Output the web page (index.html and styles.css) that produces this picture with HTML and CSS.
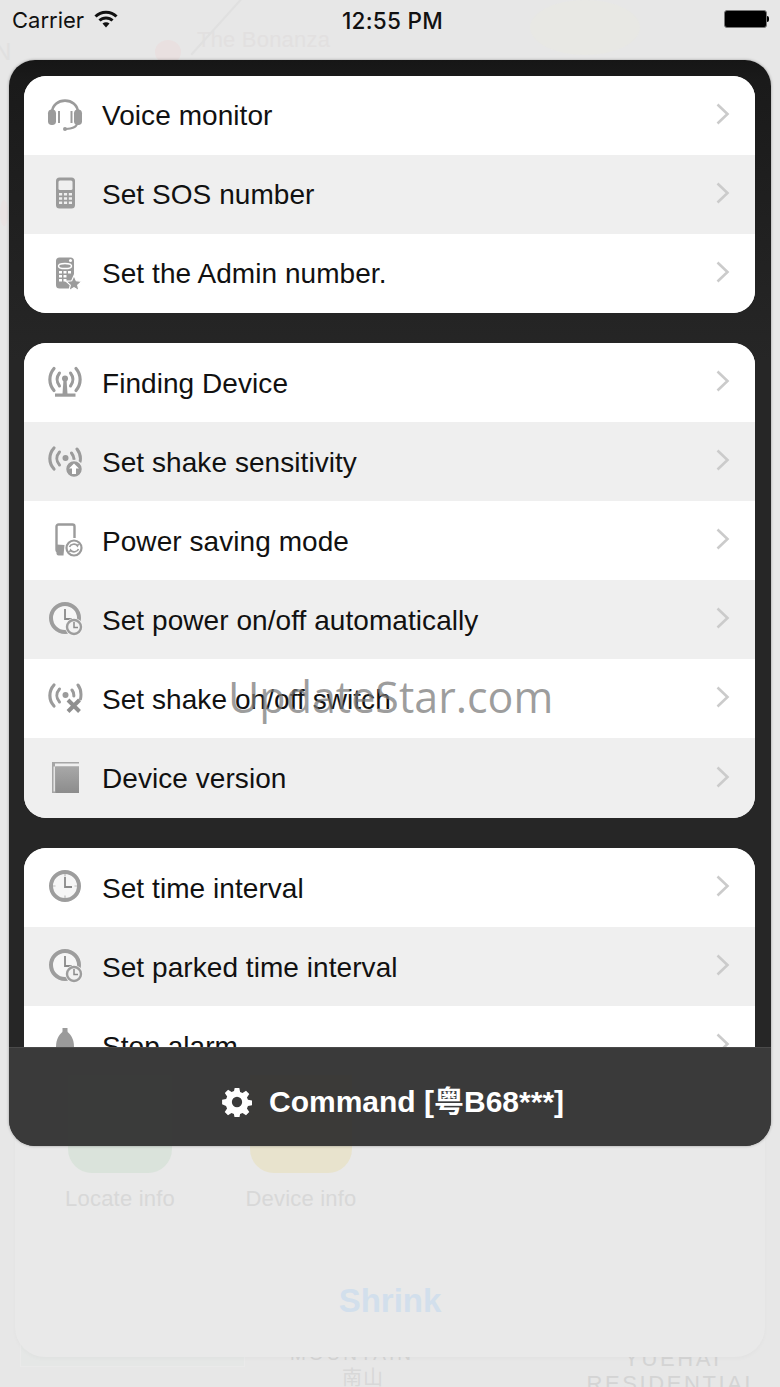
FILE: index.html
```html
<!DOCTYPE html>
<html lang="en">
<head>
<meta charset="utf-8">
<title>Command</title>
<link rel="stylesheet" href="styles.css">
</head>
<body>
<svg class="defs" width="0" height="0" aria-hidden="true">
  <defs>
    <symbol id="chev" viewBox="0 0 16 24"><path d="M2.500 2.500 12.500 12 2.500 21.500" fill="none" stroke="#cbcbcb" stroke-width="2.600"/></symbol>
    <symbol id="radio" viewBox="0 0 36 36">
      <g fill="none" stroke="#9b9b9b" stroke-linecap="round">
        <path d="M7 5C1.500 11 1.500 20 7 26" stroke-width="3.200"/>
        <path d="M12.500 9C9 13 9 18 12.500 22" stroke-width="3"/>
      </g>
    </symbol>
    <symbol id="clockbig" viewBox="0 0 36 36">
      <circle cx="18" cy="17" r="14" fill="#f6f6f6" stroke="#9d9d9d" stroke-width="4"/>
      <path d="M18 8v10h7" fill="none" stroke="#8a8a8a" stroke-width="1.800"/>
    </symbol>
    <symbol id="clocksmall" viewBox="0 0 36 36">
      <circle cx="27" cy="26" r="9" fill="#f4f4f4"/>
      <circle cx="27" cy="26" r="7" fill="#f2f2f2" stroke="#9d9d9d" stroke-width="2.400"/>
      <path d="M27 21v5.500h4" fill="none" stroke="#8a8a8a" stroke-width="1.500"/>
    </symbol>
  </defs>
</svg>
<div class="screen">
  <div class="map" aria-hidden="true">
    <span class="map-label edge">N</span>
    <span class="map-label bonanza">The Bonanza</span>
    <span class="map-pin"></span>
    <span class="map-road"></span>
    <span class="map-tint tint-a"></span>
    <span class="map-tint tint-b"></span>
    <span class="map-block"></span>
    <span class="map-label mountain">MOUNTAIN</span>
    <span class="map-label nanshan">南山</span>
    <span class="map-label yuehai">YUEHAI<br>RESIDENTIAL</span>
  </div>
  <div class="sheet" aria-hidden="true">
    <div class="tile tile-green"></div>
    <div class="tile tile-yellow"></div>
    <span class="tile-label locate">Locate info</span>
    <span class="tile-label device">Device info</span>
    <span class="shrink">Shrink</span>
  </div>

  <header class="status">
    <span class="carrier">Carrier</span>
    <svg class="wifi" viewBox="0 0 24 18" width="24" height="18">
      <path d="M1.500 6.500C7 .8 17 .8 22.500 6.500" fill="none" stroke="#111" stroke-width="3"/>
      <path d="M5.500 10.500C9 7 15 7 18.500 10.500" fill="none" stroke="#111" stroke-width="3"/>
      <path d="M8.500 13.500C10.500 11.700 13.500 11.700 15.500 13.500L12 17.500Z" fill="#111"/>
    </svg>
    <span class="time">12:55 PM</span>
    <span class="battery"><span class="battery-body"></span><span class="battery-tip"></span></span>
  </header>

  <main class="panel">
    <div class="scroll">
      <section class="group">
        <div class="row">
          <svg class="icon" viewBox="0 0 36 36"><path d="M5 20V16C5 -.5 31 -.5 31 16V20" fill="none" stroke="#9b9b9b" stroke-width="2.600"/><rect x="1" y="12.500" width="8" height="15.500" rx="3.800" fill="#9b9b9b"/><rect x="27" y="12.500" width="8" height="15.500" rx="3.800" fill="#9b9b9b"/><path d="M12 14v12M24.500 14v12" stroke="#9b9b9b" stroke-width="2" fill="none"/><path d="M30 27C29 31 24 31.500 19 32" fill="none" stroke="#9b9b9b" stroke-width="2"/><circle cx="18" cy="32" r="2" fill="#9b9b9b"/></svg>
          <span class="label">Voice monitor</span>
          <svg class="chev"><use href="#chev"/></svg>
        </div>
        <div class="row">
          <svg class="icon" viewBox="0 0 36 36"><rect x="9" y="1.500" width="19" height="31" rx="3.500" fill="#9b9b9b"/><rect x="11.500" y="4.500" width="14" height="9.500" rx="1.500" fill="#efefef"/><path d="M12 17h3.200v2.600H12zM16.900 17h3.200v2.600h-3.200zM21.800 17h3.200v2.600h-3.200zM12 21.200h3.200v2.600H12zM16.900 21.200h3.200v2.600h-3.200zM21.800 21.200h3.200v2.600h-3.200zM12 25.400h3.200V28H12zM16.900 25.400h3.200V28h-3.200zM21.800 25.400h3.200V28h-3.200z" fill="#efefef"/></svg>
          <span class="label">Set SOS number</span>
          <svg class="chev"><use href="#chev"/></svg>
        </div>
        <div class="row">
          <svg class="icon" viewBox="0 0 36 36"><rect x="9" y="2.500" width="18" height="31" rx="3.500" fill="#9b9b9b"/><circle cx="23.500" cy="5.500" r="1.500" fill="#fff"/><ellipse cx="18" cy="11" rx="6.500" ry="2.600" fill="none" stroke="#fff" stroke-width="1.500"/><path d="M12 16h3v2.400h-3zM16.500 16h3v2.400h-3zM21 16h3v2.400h-3zM12 20h3v2.400h-3zM16.500 20h3v2.400h-3zM12 24h3v2.400h-3zM16.500 24h3v2.400h-3z" fill="#fff"/><path d="M27 20.500l2.300 5.300 5.700.5-4.300 3.800 1.300 5.600-5-3-5 3 1.300-5.600-4.300-3.800 5.700-.5Z" fill="#9b9b9b" stroke="#fff" stroke-width="1.200"/></svg>
          <span class="label">Set the Admin number.</span>
          <svg class="chev"><use href="#chev"/></svg>
        </div>
      </section>

      <section class="group">
        <div class="row">
          <svg class="icon" viewBox="0 0 36 36"><g fill="none" stroke="#9b9b9b" stroke-linecap="round"><path d="M7 4.500C1.500 11 1.500 20 7 26.500M29 4.500C34.500 11 34.500 20 29 26.500" stroke-width="3.200"/><path d="M12.500 9C9.500 13 9.500 18 12.500 22M23.500 9C26.500 13 26.500 18 23.500 22" stroke-width="3"/></g><circle cx="18" cy="14.500" r="3" fill="#9b9b9b"/><path d="M16.500 15h3l1 15h-5Z" fill="#9b9b9b"/><rect x="8" y="29.500" width="20.500" height="3.200" fill="#9b9b9b"/></svg>
          <span class="label">Finding Device</span>
          <svg class="chev"><use href="#chev"/></svg>
        </div>
        <div class="row">
          <svg class="icon" viewBox="0 0 36 36"><use href="#radio"/><g fill="none" stroke="#9b9b9b" stroke-linecap="round" stroke-width="3"><path d="M30 6C33 10 34 15 33 19M24.500 10C26 12 26.800 14 27 16"/></g><circle cx="18.500" cy="15" r="3" fill="#9b9b9b"/><circle cx="27" cy="26" r="8.500" fill="#9b9b9b" stroke="#efefef" stroke-width="1.500"/><path d="M27 20.500l5 5h-3v5.500h-4v-5.500h-3Z" fill="#fff"/></svg>
          <span class="label">Set shake sensitivity</span>
          <svg class="chev"><use href="#chev"/></svg>
        </div>
        <div class="row">
          <svg class="icon" viewBox="0 0 36 36"><path d="M14 29.500H11.500A2 2 0 0 1 9.500 27.500V4.500A2 2 0 0 1 11.500 2.500H25.500A2 2 0 0 1 27.500 4.500V16" fill="none" stroke="#9b9b9b" stroke-width="2.400"/><path d="M9.500 22.500l8 .5-1 10.500h-5a2 2 0 0 1-2-2Z" fill="#9b9b9b"/><circle cx="27" cy="26" r="7.500" fill="#fff" stroke="#9b9b9b" stroke-width="2.200"/><path d="M22.500 25c1-3 6-4 8-1l1-2M31.500 27c-1 3-6 4-8 1l-1 2" fill="none" stroke="#9b9b9b" stroke-width="1.600"/></svg>
          <span class="label">Power saving mode</span>
          <svg class="chev"><use href="#chev"/></svg>
        </div>
        <div class="row">
          <svg class="icon" viewBox="0 0 36 36"><use href="#clockbig"/><use href="#clocksmall"/></svg>
          <span class="label">Set power on/off automatically</span>
          <svg class="chev"><use href="#chev"/></svg>
        </div>
        <div class="row">
          <svg class="icon" viewBox="0 0 36 36"><use href="#radio"/><g fill="none" stroke="#9b9b9b" stroke-linecap="round" stroke-width="3"><path d="M31 5C34 9 34.500 14 33.500 19M25 10C26.500 12 27 14 26.800 16"/></g><circle cx="18.500" cy="15" r="3" fill="#9b9b9b"/><path d="M21 20l11.500 11.500M32.500 20 21 31.500" stroke="#8f8f8f" stroke-width="4" fill="none"/></svg>
          <span class="label">Set shake on/off switch</span>
          <svg class="chev"><use href="#chev"/></svg>
        </div>
        <div class="row">
          <svg class="icon" viewBox="0 0 36 36"><defs><linearGradient id="book" x1="0" y1="0" x2="0" y2="1"><stop offset="0" stop-color="#a8a8a8"/><stop offset="1" stop-color="#8c8c8c"/></linearGradient></defs><path d="M5 2h27v1.500H8v3h24V33H5Z" fill="#a6a6a6"/><rect x="6.500" y="6.500" width="1.500" height="25" fill="#e4e4e4"/><rect x="8.500" y="6.500" width="23.500" height="26.500" fill="url(#book)"/></svg>
          <span class="label">Device version</span>
          <svg class="chev"><use href="#chev"/></svg>
        </div>
      </section>

      <section class="group">
        <div class="row">
          <svg class="icon" viewBox="0 0 36 36"><use href="#clockbig"/><path d="M18 5v2.500M18 26.500V29M6 17h2.500M27.500 17H30" stroke="#bbb" stroke-width="1.200"/></svg>
          <span class="label">Set time interval</span>
          <svg class="chev"><use href="#chev"/></svg>
        </div>
        <div class="row">
          <svg class="icon" viewBox="0 0 36 36"><use href="#clockbig"/><use href="#clocksmall"/></svg>
          <span class="label">Set parked time interval</span>
          <svg class="chev"><use href="#chev"/></svg>
        </div>
        <div class="row">
          <svg class="icon" viewBox="0 0 36 36"><rect x="15.500" y="1" width="5" height="4" fill="#9b9b9b"/><path d="M18 3C12 7 9 12 9 20V32H27V20C27 12 24 7 18 3Z" fill="#9b9b9b"/></svg>
          <span class="label">Stop alarm</span>
          <svg class="chev"><use href="#chev"/></svg>
        </div>
      </section>
    </div>
    <footer class="bar">
      <span class="bar-ghost ghost-green"></span>
      <span class="bar-ghost ghost-yellow"></span>
      <svg class="gear" viewBox="0 0 32 32" width="30" height="30"><path fill="#fff" fill-rule="evenodd" d="M13.500 1h5l.8 4.300 2.600 1.100 3.700-2.500 3.500 3.500-2.500 3.700 1.100 2.600 4.300.8v5l-4.300.8-1.100 2.600 2.500 3.700-3.500 3.500-3.700-2.500-2.600 1.100-.8 4.300h-5l-.8-4.300-2.600-1.100-3.700 2.500-3.500-3.500 2.500-3.700-1.100-2.600L.1 18.500v-5l4.300-.8 1.100-2.600L3 6.400l3.500-3.500 3.700 2.500 2.600-1.100ZM16 10.500a5.500 5.500 0 1 0 0 11 5.500 5.500 0 0 0 0-11Z"/></svg>
      <span class="bar-title">Command [粤B68***]</span>
    </footer>
  </main>

  <div class="watermark">UpdateStar.com</div>
</div>
</body>
</html>
```
FILE: styles.css
```css
* { box-sizing: border-box; }
html, body { margin: 0; padding: 0; }
body { width: 780px; height: 1387px; overflow: hidden; background: #e7e7e7; font-family: "Liberation Sans", Arial, sans-serif; }
.defs { position: absolute; }
.screen { position: relative; width: 780px; height: 1387px; overflow: hidden; background: #e7e7e7; }

.map { position: absolute; inset: 0; }
.map-label { position: absolute; color: #dcdcdc; white-space: nowrap; }
.edge { left: -6px; top: 38px; font-size: 24px; color: #e0e0e0; }
.bonanza { left: 197px; top: 27px; font-size: 22px; letter-spacing: .2px; color: #e2e0e0; }
.map-pin { position: absolute; left: 155px; top: 40px; width: 26px; height: 24px; border-radius: 50%; background: #e9e0e0; }
.map-road { position: absolute; left: 178px; top: 24px; width: 80px; height: 2px; background: #e0e0e0; transform: rotate(-48deg); }
.map-tint { position: absolute; border-radius: 50%; }
.tint-a { left: 530px; top: 0; width: 110px; height: 55px; background: #e8e8e4; }
.tint-b { left: 0; top: 200px; width: 8px; height: 26px; background: #e9e3e3; }
.map-block { position: absolute; left: 20px; top: 1330px; width: 225px; height: 37px; border: 1px solid #eaeaea; background: #e5e7e6; }
.mountain { left: 290px; top: 1343px; font-size: 19px; letter-spacing: 3px; color: #d4d4d4; }
.nanshan { left: 342px; top: 1362px; font-size: 20px; letter-spacing: 1px; font-family: "Noto Sans CJK SC", sans-serif; color: #d8d8d8; }
.yuehai { left: 580px; top: 1346px; width: 186px; text-align: center; font-size: 22px; line-height: 25px; letter-spacing: 2.6px; color: #d4d4d4; }

.sheet { position: absolute; left: 15px; top: 1000px; width: 750px; height: 357px; border-radius: 0 0 30px 30px; background: #e9e9e9; box-shadow: 0 2px 4px rgba(0,0,0,.025); }
.tile { position: absolute; top: 70px; width: 104px; height: 103px; border-radius: 24px; }
.tile-green { left: 53px; background: #dae3db; }
.tile-yellow { left: 235px; width: 102px; background: #e8e3cd; }
.tile-label { position: absolute; top: 187px; width: 180px; text-align: center; font-size: 22px; line-height: 24px; letter-spacing: .2px; color: #d8d8d8; }
.locate { left: 15px; }
.device { left: 196px; }
.shrink { position: absolute; left: 0; right: 0; top: 282px; text-align: center; font-size: 33px; line-height: 38px; font-weight: bold; color: #d2dfec; }

.status { position: relative; height: 40px; display: flex; align-items: center; padding: 0 11px 0 12px; color: #111; font-family: Inter, "Liberation Sans", sans-serif; font-size: 22px; }
.carrier { width: 72px; white-space: nowrap; }
.wifi { margin-left: 10px; margin-top: -2px; }
.time { position: absolute; left: 341px; width: 103px; text-align: center; font-weight: 500; font-size: 22.500px; letter-spacing: .3px; white-space: nowrap; }
.battery { margin-left: auto; display: flex; align-items: center; margin-top: -2px; }
.battery-body { width: 43px; height: 18px; border-radius: 3px; background: #000; border: 1px solid #777; }
.battery-tip { width: 2px; height: 6px; border-radius: 0 2px 2px 0; background: #000; }

.panel { position: relative; margin: 20px 9px 0; height: 1086px; border-radius: 26px; overflow: hidden; background: linear-gradient(#161616 0, #1a1a1a 20px, #262626 300px, #262626 100%); box-shadow: 0 0 3px rgba(0,0,0,.35); display: flex; flex-direction: column; }
.scroll { height: 987px; overflow: hidden; padding: 16px 16px 0 15px; display: flex; flex-direction: column; gap: 30px; flex: none; }
.group { border-radius: 22px; overflow: hidden; background: #fff; flex: none; }
.group + .group .label { margin-top: 2px; }
.row { height: 79px; display: flex; align-items: center; padding-left: 23px; padding-right: 24px; background: #fff; }
.row:nth-child(even) { background: #efefef; }
.group:nth-child(2) .row:last-child { height: 80px; }
.icon { width: 36px; height: 36px; flex: none; margin-top: -1px; }
.label { margin-left: 19px; font-size: 28px; line-height: 34px; letter-spacing: .06px; color: #111; flex: 1; white-space: nowrap; }
.chev { width: 16px; height: 24px; flex: none; margin-top: -3px; }

.bar { position: relative; height: 99px; flex: none; background: #3a3a3a; border-top: 1px solid #4a4a4a; display: flex; align-items: center; padding: 9px 0 0 213px; }
.bar-ghost { position: absolute; top: 27px; width: 104px; height: 72px; }
.ghost-green { left: 59px; background: rgba(60,80,65,.08); }
.ghost-yellow { left: 241px; width: 102px; background: rgba(80,70,40,.08); }
.gear { flex: none; position: relative; }
.bar-title { position: relative; margin-left: 17px; font-size: 30px; line-height: 40px; font-weight: bold; color: #fff; white-space: nowrap; font-family: "Liberation Sans", "Noto Sans CJK SC", sans-serif; }

.watermark { position: absolute; left: 228px; top: 669px; font-family: "Open Sans", sans-serif; font-size: 43px; line-height: 56px; color: rgba(120,120,120,.72); white-space: nowrap; }
```
